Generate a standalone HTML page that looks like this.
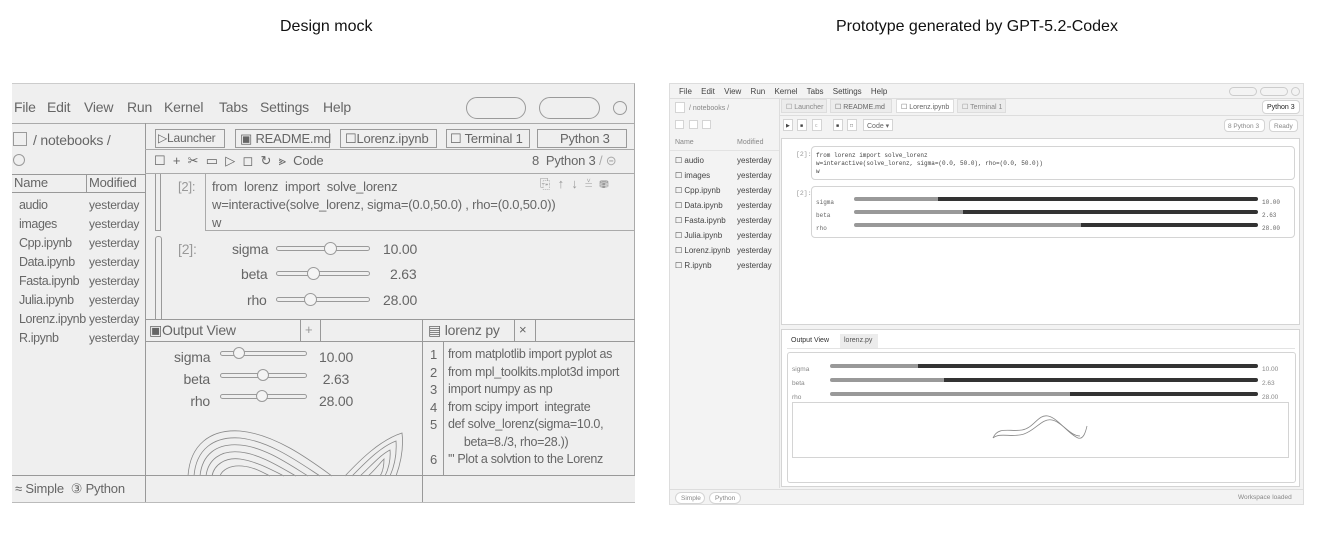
<!DOCTYPE html>
<html><head><meta charset="utf-8"><style>
*{margin:0;padding:0;box-sizing:border-box}
body{width:1318px;height:549px;background:#fff;position:relative;overflow:hidden;font-family:"Liberation Sans",sans-serif}
.a{position:absolute;white-space:nowrap}
.t{position:absolute;white-space:nowrap;line-height:1}
.L{color:#666;font-size:13px;font-family:"Liberation Sans Narrow","Liberation Sans",sans-serif;letter-spacing:-0.2px}
.b{position:absolute;border:1px solid #9a9a9a}
.R{color:#444;font-size:8px}
.rb{position:absolute;border:1px solid #d4d4d4;background:#fff}
.m{font-family:"Liberation Mono",monospace}
</style></head><body>
<div class="t" style="left:280px;top:19px;font-size:16px;color:#111">Design mock</div>
<div class="t" style="left:836px;top:19px;font-size:16px;color:#111">Prototype generated by GPT-5.2-Codex</div>

<!-- LEFT SKETCH -->
<div class="a" style="left:12px;top:83px;width:623px;height:420px;background:#efefef;border-top:1px solid #ccc;border-right:1px solid #aaa"></div>
<div class="a" style="left:12px;top:123px;width:623px;border-top:1px solid #aaa"></div>
<div class="t L" style="left:14px;top:100px;font-size:14px">File</div>
<div class="t L" style="left:47px;top:100px;font-size:14px">Edit</div>
<div class="t L" style="left:84px;top:100px;font-size:14px">View</div>
<div class="t L" style="left:127px;top:100px;font-size:14px">Run</div>
<div class="t L" style="left:164px;top:100px;font-size:14px">Kernel</div>
<div class="t L" style="left:219px;top:100px;font-size:14px">Tabs</div>
<div class="t L" style="left:260px;top:100px;font-size:14px">Settings</div>
<div class="t L" style="left:323px;top:100px;font-size:14px">Help</div>
<div class="b" style="left:466px;top:97px;width:60px;height:22px;border-radius:11px"></div>
<div class="b" style="left:539px;top:97px;width:61px;height:22px;border-radius:11px"></div>
<div class="b" style="left:613px;top:101px;width:14px;height:14px;border-radius:50%"></div>
<div class="a" style="left:145px;top:123px;height:380px;border-left:1px solid #999"></div>
<div class="b" style="left:13px;top:132px;width:14px;height:14px"></div>
<div class="t L" style="left:33px;top:133px;font-size:14px">/ notebooks /</div>
<div class="b" style="left:13px;top:154px;width:12px;height:12px;border-radius:50%"></div>
<div class="a" style="left:12px;top:174px;width:133px;border-top:1px solid #999"></div>
<div class="a" style="left:12px;top:192px;width:133px;border-top:1px solid #999"></div>
<div class="a" style="left:86px;top:174px;height:18px;border-left:1px solid #999"></div>
<div class="t L" style="left:14px;top:176px">Name</div><div class="t L" style="left:89px;top:176px">Modified</div>
<div class="t L" style="left:19px;top:196px;line-height:19px;font-size:12.5px;letter-spacing:-0.4px">audio<br>images<br>Cpp.ipynb<br>Data.ipynb<br>Fasta.ipynb<br>Julia.ipynb<br>Lorenz.ipynb<br>R.ipynb</div>
<div class="t L" style="left:89px;top:196px;line-height:19px;font-size:12px">yesterday<br>yesterday<br>yesterday<br>yesterday<br>yesterday<br>yesterday<br>yesterday<br>yesterday</div>
<!-- tabs -->
<div class="b" style="left:155px;top:129px;width:70px;height:19px"></div><div class="t L" style="left:158px;top:132px;font-size:12px">▷Launcher</div>
<div class="b" style="left:235px;top:129px;width:95px;height:19px"></div><div class="t L" style="left:240px;top:132px">▣ README.md</div>
<div class="b" style="left:340px;top:129px;width:97px;height:19px"></div><div class="t L" style="left:345px;top:132px">☐Lorenz.ipynb</div>
<div class="b" style="left:446px;top:129px;width:84px;height:19px"></div><div class="t L" style="left:450px;top:132px">☐ Terminal 1</div>
<div class="b" style="left:537px;top:129px;width:90px;height:19px"></div><div class="t L" style="left:560px;top:132px">Python 3</div>
<div class="a" style="left:145px;top:149px;width:490px;border-top:1px solid #aaa"></div>
<div class="t L" style="left:154px;top:154px;word-spacing:4px">☐ + ✂ ▭ ▷ ◻ ↻ ⪢ Code</div>
<div class="t L" style="left:532px;top:154px">8&nbsp; Python 3 <span style="color:#aaa">/ ⊝</span></div>
<div class="a" style="left:145px;top:173px;width:490px;border-top:1px solid #aaa"></div>
<!-- cell -->
<div class="b" style="left:155px;top:174px;width:6px;height:57px;border-top:none"></div>
<div class="t L" style="left:178px;top:180px;color:#999">[2]:</div>
<div class="a" style="left:205px;top:174px;width:430px;height:57px;border-left:1px solid #aaa;border-bottom:1px solid #aaa"></div>
<div class="t L" style="left:212px;top:178px;line-height:18px">from&nbsp; lorenz&nbsp; import&nbsp; solve_lorenz<br>w=interactive(solve_lorenz, sigma=(0.0,50.0) , rho=(0.0,50.0))<br>w</div>
<div class="t L" style="left:540px;top:177px;color:#999;word-spacing:4px">⎘ ↑ ↓ ≚ ⛃</div>
<div class="b" style="left:155px;top:236px;width:7px;height:84px;border-radius:3px 3px 0 0"></div>
<div class="t L" style="left:178px;top:242px;color:#999;font-size:14px">[2]:</div>
<div class="t L" style="left:232px;top:242px;font-size:14px">sigma</div>
<div class="t L" style="left:241px;top:267px;font-size:14px">beta</div>
<div class="t L" style="left:247px;top:293px;font-size:14px">rho</div>
<div class="b" style="left:276px;top:246px;width:94px;height:5px;border-radius:3px"></div>
<div class="b" style="left:276px;top:271px;width:94px;height:5px;border-radius:3px"></div>
<div class="b" style="left:276px;top:297px;width:94px;height:5px;border-radius:3px"></div>
<div class="b" style="left:324px;top:242px;width:13px;height:13px;border-radius:50%;background:#f4f4f4"></div>
<div class="b" style="left:307px;top:267px;width:13px;height:13px;border-radius:50%;background:#f4f4f4"></div>
<div class="b" style="left:304px;top:293px;width:13px;height:13px;border-radius:50%;background:#f4f4f4"></div>
<div class="t L" style="left:383px;top:242px;font-size:14px">10.00</div>
<div class="t L" style="left:390px;top:267px;font-size:14px">2.63</div>
<div class="t L" style="left:383px;top:293px;font-size:14px">28.00</div>
<!-- bottom panels -->
<div class="a" style="left:145px;top:319px;width:490px;border-top:1px solid #999"></div>
<div class="a" style="left:145px;top:341px;width:490px;border-top:1px solid #999"></div>
<div class="t L" style="left:149px;top:323px;font-size:14px">▣Output View</div>
<div class="a" style="left:300px;top:319px;height:22px;border-left:1px solid #999"></div>
<div class="t L" style="left:305px;top:323px;color:#999">+</div>
<div class="a" style="left:320px;top:319px;height:22px;border-left:1px solid #999"></div>
<div class="a" style="left:422px;top:319px;height:184px;border-left:1px solid #999"></div>
<div class="t L" style="left:428px;top:323px;font-size:14px">▤ lorenz py</div>
<div class="a" style="left:514px;top:319px;height:22px;border-left:1px solid #999"></div>
<div class="t L" style="left:519px;top:323px">×</div>
<div class="a" style="left:535px;top:319px;height:22px;border-left:1px solid #999"></div>
<div class="t L" style="left:174px;top:346px;line-height:22px;text-align:right;width:36px;font-size:14px">sigma<br>beta<br>rho</div>
<div class="b" style="left:220px;top:351px;width:87px;height:5px;border-radius:3px"></div>
<div class="b" style="left:220px;top:373px;width:87px;height:5px;border-radius:3px"></div>
<div class="b" style="left:220px;top:394px;width:87px;height:5px;border-radius:3px"></div>
<div class="b" style="left:233px;top:347px;width:12px;height:12px;border-radius:50%;background:#f4f4f4"></div>
<div class="b" style="left:257px;top:369px;width:12px;height:12px;border-radius:50%;background:#f4f4f4"></div>
<div class="b" style="left:256px;top:390px;width:12px;height:12px;border-radius:50%;background:#f4f4f4"></div>
<div class="t L" style="left:319px;top:346px;line-height:22px;font-size:14px">10.00<br>&nbsp;2.63<br>28.00</div>
<svg class="a" style="left:180px;top:425px" width="230" height="52" fill="none" stroke="#888" stroke-width="0.8">
<path d="M8 51 C10 20 30 4 60 6 C95 9 130 35 152 51"/><path d="M14 51 C16 25 33 11 60 13 C90 16 120 38 140 51"/><path d="M20 51 C22 30 36 18 60 20 C85 22 110 40 128 51"/><path d="M26 51 C28 35 40 25 60 27 C80 29 100 42 116 51"/><path d="M32 51 C34 40 45 32 60 34 C75 36 90 44 104 51"/><path d="M40 51 C42 45 50 40 62 41 C74 42 82 47 90 51"/>
<path d="M165 51 C180 35 200 15 222 8 C224 25 220 40 216 51"/><path d="M172 51 C185 38 200 22 216 16 C217 30 214 42 210 51"/><path d="M180 51 C190 42 200 30 210 25 C211 35 208 45 205 51"/><path d="M188 51 C195 45 200 38 204 34 C204 42 202 48 200 51"/>
</svg>
<div class="t L" style="left:430px;top:346px;line-height:17.5px">1<br>2<br>3<br>4<br>5<br>&nbsp;<br>6</div>
<div class="a" style="left:443px;top:341px;height:135px;border-left:1px solid #999"></div>
<div class="t L" style="left:448px;top:346px;line-height:17.5px;font-size:12.5px;letter-spacing:-0.3px">from matplotlib import pyplot as<br>from mpl_toolkits.mplot3d import<br>import numpy as np<br>from scipy import&nbsp; integrate<br>def solve_lorenz(sigma=10.0,<br>&nbsp;&nbsp;&nbsp;&nbsp;&nbsp;beta=8./3, rho=28.))<br>'" Plot a solvtion to the Lorenz</div>
<div class="a" style="left:423px;top:476px;width:212px;height:27px;background:#efefef"></div>
<div class="a" style="left:12px;top:475px;width:623px;border-top:1px solid #999"></div>
<div class="a" style="left:12px;top:502px;width:623px;border-top:1px solid #bbb"></div>
<div class="t L" style="left:15px;top:482px">&#8776; Simple&nbsp;&nbsp;③ Python</div>

<!-- RIGHT PROTOTYPE -->
<div class="a" style="left:669px;top:83px;width:635px;height:422px;background:#f3f3f3;border:1px solid #ddd"></div>
<div class="t R" style="left:679px;top:88px;word-spacing:7px">File Edit View Run Kernel Tabs Settings Help</div>
<div class="a" style="left:1229px;top:87px;width:28px;height:9px;border:1px solid #ccc;border-radius:5px"></div>
<div class="a" style="left:1260px;top:87px;width:28px;height:9px;border:1px solid #ccc;border-radius:5px"></div>
<div class="a" style="left:1291px;top:87px;width:9px;height:9px;border:1px solid #ccc;border-radius:50%"></div>
<div class="a" style="left:670px;top:98px;width:634px;border-top:1px solid #ddd"></div>
<div class="a" style="left:779px;top:98px;height:390px;border-left:1px solid #ddd"></div>
<div class="rb" style="left:675px;top:102px;width:10px;height:11px"></div>
<div class="t R" style="left:689px;top:105px;color:#888;font-size:7px">/ notebooks /</div>
<div class="rb" style="left:675px;top:120px;width:9px;height:9px"></div>
<div class="rb" style="left:689px;top:120px;width:9px;height:9px"></div>
<div class="rb" style="left:702px;top:120px;width:9px;height:9px"></div>
<div class="t R" style="left:675px;top:139px;color:#888;font-size:7px">Name</div>
<div class="t R" style="left:737px;top:139px;color:#888;font-size:7px">Modified</div>
<div class="a" style="left:670px;top:150px;width:109px;border-top:1px solid #e2e2e2"></div>
<div class="t R" style="left:675px;top:153px;line-height:15px">☐ audio<br>☐ images<br>☐ Cpp.ipynb<br>☐ Data.ipynb<br>☐ Fasta.ipynb<br>☐ Julia.ipynb<br>☐ Lorenz.ipynb<br>☐ R.ipynb</div>
<div class="t R" style="left:737px;top:153px;line-height:15px">yesterday<br>yesterday<br>yesterday<br>yesterday<br>yesterday<br>yesterday<br>yesterday<br>yesterday</div>
<div class="a R" style="left:781px;top:99px;width:46px;height:14px;background:#ececec;border:1px solid #ddd;padding:3px 4px;color:#888;font-size:7px">☐ Launcher</div>
<div class="a R" style="left:830px;top:99px;width:62px;height:14px;background:#ececec;border:1px solid #ddd;padding:3px 4px;color:#666;font-size:7px">☐ README.md</div>
<div class="a R" style="left:896px;top:99px;width:58px;height:14px;background:#fff;border:1px solid #ddd;padding:3px 4px;color:#666;font-size:7px">☐ Lorenz.ipynb</div>
<div class="a R" style="left:957px;top:99px;width:49px;height:14px;background:#ececec;border:1px solid #ddd;padding:3px 4px;color:#888;font-size:7px">☐ Terminal 1</div>
<div class="rb R" style="left:1262px;top:100px;width:38px;height:14px;border-radius:4px;padding:3px 4px;font-size:7px;color:#222">Python 3</div>
<div class="a" style="left:779px;top:115px;width:525px;border-top:1px solid #ddd"></div>
<div class="rb R" style="left:783px;top:119px;width:10px;height:12px;font-size:5px;padding:3px 2px">▶</div>
<div class="rb R" style="left:797px;top:119px;width:10px;height:12px;font-size:5px;padding:3px 2px">■</div>
<div class="rb R" style="left:812px;top:119px;width:10px;height:12px;font-size:5px;padding:3px 2px;color:#aaa">c</div>
<div class="rb R" style="left:833px;top:119px;width:10px;height:12px;font-size:5px;padding:3px 2px">■</div>
<div class="rb R" style="left:847px;top:119px;width:10px;height:12px;font-size:5px;padding:3px 2px">□</div>
<div class="rb R" style="left:863px;top:119px;width:30px;height:12px;font-size:7px;padding:2px 3px;color:#666;white-space:nowrap">Code ▾</div>
<div class="rb R" style="left:1224px;top:119px;width:41px;height:13px;border-radius:4px;font-size:6.5px;padding:3px 3px;color:#888">8 Python 3</div>
<div class="rb R" style="left:1269px;top:119px;width:29px;height:13px;border-radius:4px;font-size:6.5px;padding:3px 4px;color:#888">Ready</div>
<div class="rb" style="left:781px;top:138px;width:519px;height:187px"></div>
<div class="t R m" style="left:796px;top:152px;color:#999;font-size:6.5px">[2]:</div>
<div class="rb" style="left:811px;top:146px;width:484px;height:34px;border-radius:4px"></div>
<div class="t R m" style="left:816px;top:152px;font-size:6px;line-height:8px">from lorenz import solve_lorenz<br>w=interactive(solve_lorenz, sigma=(0.0, 50.0), rho=(0.0, 50.0))<br>w</div>
<div class="t R m" style="left:796px;top:191px;color:#999;font-size:6.5px">[2]:</div>
<div class="rb" style="left:811px;top:186px;width:484px;height:52px;border-radius:4px"></div>
<div class="t R m" style="left:816px;top:196px;font-size:6px;line-height:13px;color:#666">sigma<br>beta<br>rho</div>
<div class="t R m" style="left:1262px;top:196px;font-size:6px;line-height:13px;color:#666">10.00<br>2.63<br>28.00</div>
<div class="a" style="left:854px;top:197px;width:404px;height:4px;border-radius:2px;background:linear-gradient(90deg,#999 0 84px,#333 84px)"></div>
<div class="a" style="left:854px;top:210px;width:404px;height:4px;border-radius:2px;background:linear-gradient(90deg,#999 0 109px,#333 109px)"></div>
<div class="a" style="left:854px;top:223px;width:404px;height:4px;border-radius:2px;background:linear-gradient(90deg,#999 0 227px,#333 227px)"></div>
<div class="rb" style="left:781px;top:329px;width:519px;height:158px"></div>
<div class="a R" style="left:788px;top:334px;width:47px;height:14px;padding:3px 3px;font-size:7px;color:#333">Output View</div>
<div class="a R" style="left:840px;top:334px;width:38px;height:14px;padding:3px 4px;font-size:7px;background:#ececec;color:#555">lorenz.py</div>
<div class="a" style="left:787px;top:348px;width:508px;border-top:1px solid #e3e3e3"></div>
<div class="rb" style="left:787px;top:352px;width:509px;height:131px;border-radius:3px"></div>
<div class="t R" style="left:792px;top:363px;font-size:6.5px;line-height:14px;color:#888">sigma<br>beta<br>rho</div>
<div class="t R" style="left:1262px;top:363px;font-size:6.5px;line-height:14px;color:#888">10.00<br>2.63<br>28.00</div>
<div class="a" style="left:830px;top:364px;width:428px;height:4px;border-radius:2px;background:linear-gradient(90deg,#999 0 88px,#333 88px)"></div>
<div class="a" style="left:830px;top:378px;width:428px;height:4px;border-radius:2px;background:linear-gradient(90deg,#999 0 114px,#333 114px)"></div>
<div class="a" style="left:830px;top:392px;width:428px;height:4px;border-radius:2px;background:linear-gradient(90deg,#999 0 240px,#333 240px)"></div>
<div class="rb" style="left:792px;top:402px;width:497px;height:56px"></div>
<svg class="a" style="left:990px;top:412px" width="100" height="32" fill="none" stroke="#888" stroke-width="0.8"><path d="M3 26 C8 14 20 20 32 18 C44 16 48 2 58 4 C68 6 78 22 88 26 C94 28 96 18 97 14"/><path d="M3 26 C10 20 22 26 34 22 C46 18 52 6 62 8 C72 10 80 24 90 24"/></svg>
<div class="a" style="left:670px;top:489px;width:634px;border-top:1px solid #ddd"></div>
<div class="rb R" style="left:675px;top:492px;width:30px;height:12px;border-radius:6px;font-size:6.5px;padding:2px 5px;color:#888">Simple</div>
<div class="rb R" style="left:709px;top:492px;width:32px;height:12px;border-radius:6px;font-size:6.5px;padding:2px 5px;color:#888">Python</div>
<div class="t R" style="left:1238px;top:495px;font-size:6.5px;color:#888">Workspace loaded</div>
</body></html>
